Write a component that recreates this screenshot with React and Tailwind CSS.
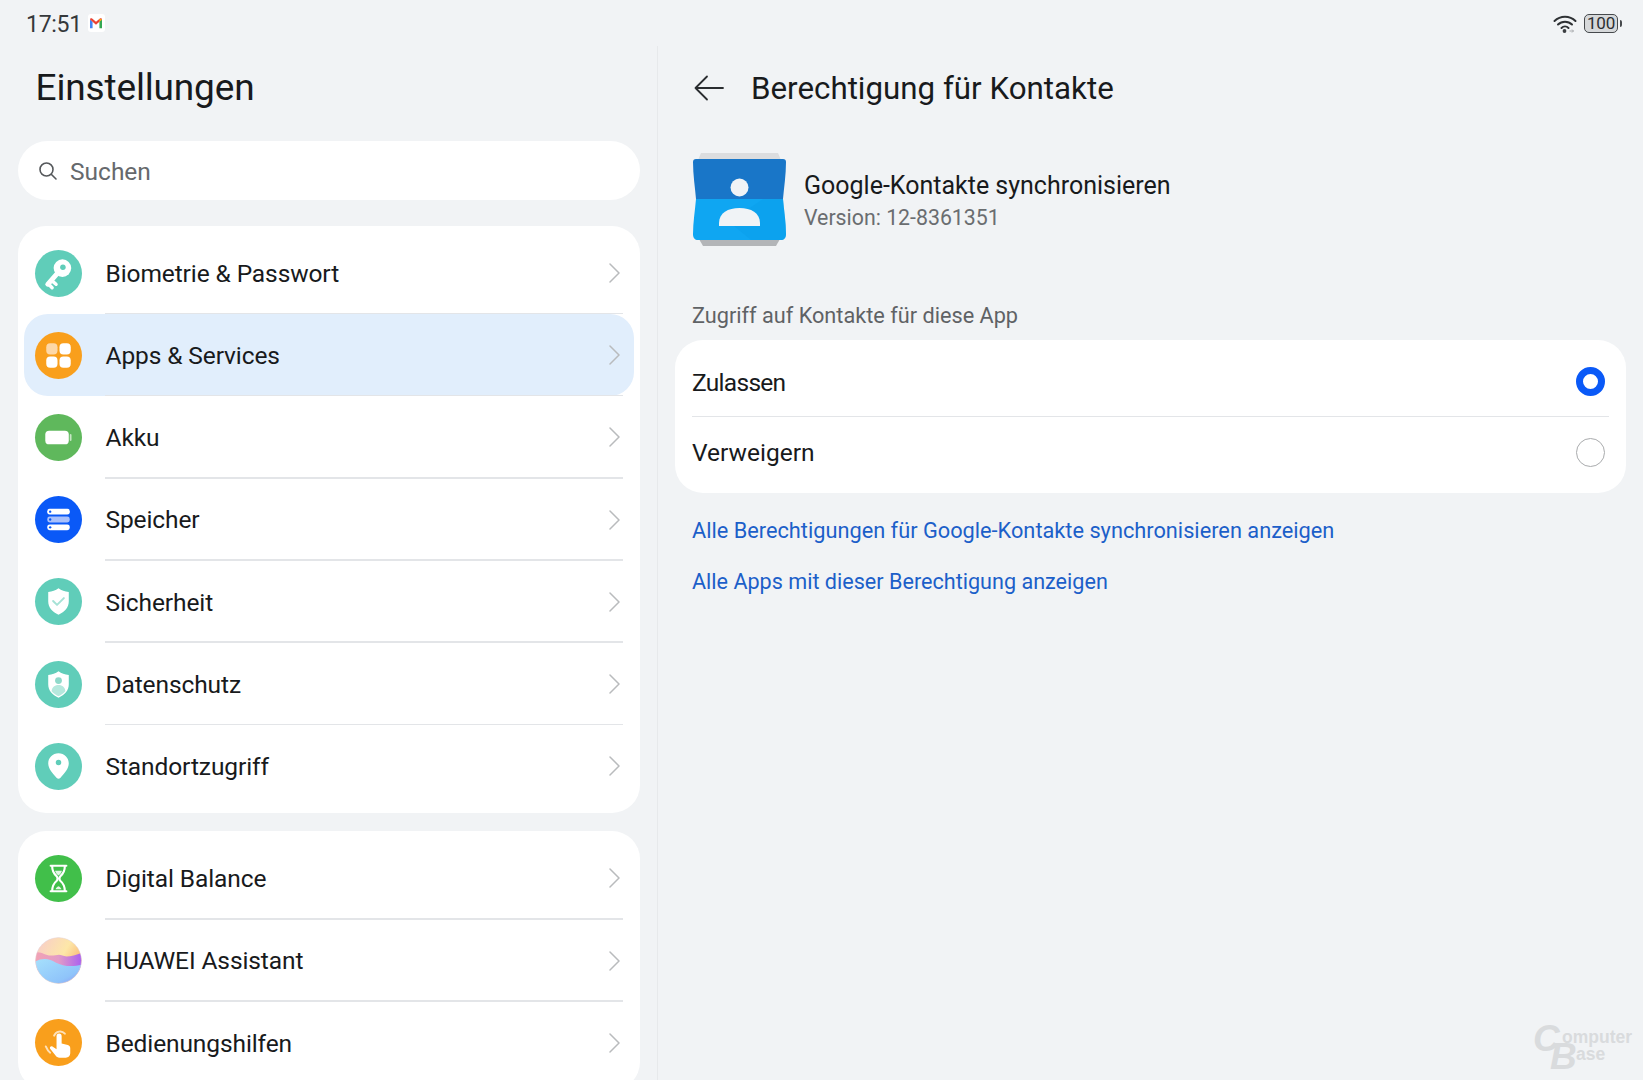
import React from 'react';

const FONT = 'font-["Roboto","Noto_Sans",sans-serif]';

const KeyIcon = () => (
  <svg viewBox="0 0 48 48" className="w-full h-full">
    <circle cx="28" cy="18.500" r="9" fill="#fff" />
    <path d="M23.500 23L13 35" fill="none" stroke="#fff" strokeWidth="5" strokeLinecap="round" />
    <path d="M18 32l3.500 3M14.500 35.500l3 3" fill="none" stroke="#fff" strokeWidth="3.500" strokeLinecap="round" />
    <circle cx="28.500" cy="17.500" r="2.800" fill="#60cdb9" />
  </svg>
);

const AppsIcon = () => (
  <svg viewBox="0 0 48 48" className="w-full h-full">
    <rect x="11.500" y="11.500" width="11.500" height="11.500" rx="4" fill="#fdd8a8" />
    <rect x="25" y="11.500" width="11.500" height="11.500" rx="4" fill="#fff" />
    <rect x="11.500" y="25" width="11.500" height="11.500" rx="4" fill="#fff" />
    <rect x="25" y="25" width="11.500" height="11.500" rx="4" fill="#fff" />
  </svg>
);

const BatteryIcon = () => (
  <svg viewBox="0 0 48 48" className="w-full h-full">
    <rect x="10.500" y="17" width="24" height="14" rx="4" fill="#fff" />
    <rect x="35.500" y="20.500" width="1.800" height="7" rx="0.900" fill="#c6e6c4" />
  </svg>
);

const StorageIcon = () => (
  <svg viewBox="0 0 48 48" className="w-full h-full">
    <rect x="12.500" y="13" width="23" height="6" rx="2.500" fill="#fff" />
    <rect x="12.500" y="21" width="23" height="6" rx="2.500" fill="#a9c0fb" />
    <rect x="12.500" y="29" width="23" height="6" rx="2.500" fill="#fff" />
    <circle cx="15.500" cy="16" r="1.200" fill="#0a59f7" />
    <circle cx="15.500" cy="24" r="1.200" fill="#0a59f7" />
    <circle cx="15.500" cy="32" r="1.200" fill="#0a59f7" />
  </svg>
);

const SHIELD = 'M24 10.500c3 2.200 6.400 3.400 10.500 3.800v9.500c0 6.400-4 10.800-10.500 13.700-6.500-2.900-10.500-7.300-10.500-13.700v-9.500c4.100-.4 7.500-1.600 10.500-3.800z';

const ShieldCheckIcon = () => (
  <svg viewBox="0 0 48 48" className="w-full h-full">
    <path d={SHIELD} fill="#fff" />
    <path d="M18.500 23.500l4 4 7-7" fill="none" stroke="#a6e2d6" strokeWidth="2" strokeLinecap="round" strokeLinejoin="round" />
  </svg>
);

const ShieldUserIcon = () => (
  <svg viewBox="0 0 48 48" className="w-full h-full">
    <path d={SHIELD} fill="#fff" />
    <circle cx="24" cy="20" r="3.500" fill="#8fd9ca" />
    <path d="M17 31c0-4 3-6.500 7-6.500s7 2.500 7 6.500c-1.800 2-4.200 3.800-7 5.100-2.800-1.300-5.200-3.100-7-5.100z" fill="#b5e8dd" />
  </svg>
);

const PinIcon = () => (
  <svg viewBox="0 0 48 48" className="w-full h-full">
    <path d="M24 10.500c5.900 0 10.500 4.500 10.500 10.300 0 5.600-4.600 10.500-8.700 15-1 1-2.600 1-3.600 0-4.100-4.500-8.700-9.400-8.700-15 0-5.800 4.600-10.300 10.500-10.300z" fill="#fff" />
    <circle cx="24" cy="20" r="2.800" fill="#60cdb9" />
  </svg>
);

const HourglassIcon = () => (
  <svg viewBox="0 0 48 48" className="w-full h-full">
    <path d="M16 11h16M16 37h16M17.500 11c0 5 1.500 8 4.500 10.500 1.300 1.100 1.300 3.900 0 5C19 29 17.500 32 17.500 37M30.500 11c0 5-1.500 8-4.500 10.500-1.300 1.100-1.300 3.900 0 5 3 2.500 4.500 5.500 4.500 10.500" fill="none" stroke="#fff" strokeWidth="2.200" strokeLinecap="round" />
    <path d="M20.500 16h7c-.5 2-1.800 3.500-3.500 5-1.700-1.500-3-3-3.500-5zM21 35c.5-1.500 1.500-2.300 3-3 1.500.7 2.500 1.500 3 3z" fill="#fff" opacity="0.85" />
  </svg>
);

const AssistantIcon = () => (
  <svg viewBox="0 0 48 48" className="w-full h-full">
    <defs>
      <linearGradient id="asTop" x1="0" y1="0" x2="1" y2="0.600">
        <stop offset="0" stopColor="#f7c9cf" />
        <stop offset="0.600" stopColor="#fde7a8" />
        <stop offset="1" stopColor="#f9ad6a" />
      </linearGradient>
      <linearGradient id="asMid" x1="0" y1="0" x2="1" y2="0">
        <stop offset="0" stopColor="#f2a3b4" />
        <stop offset="0.500" stopColor="#e29bc7" />
        <stop offset="1" stopColor="#a95ff0" />
      </linearGradient>
      <linearGradient id="asLow" x1="0" y1="0" x2="1" y2="1">
        <stop offset="0" stopColor="#a6e0fc" />
        <stop offset="0.700" stopColor="#8fc4fa" />
        <stop offset="1" stopColor="#8e93f3" />
      </linearGradient>
      <clipPath id="asClip"><circle cx="24" cy="24" r="23.500" /></clipPath>
    </defs>
    <g clipPath="url(#asClip)">
      <rect width="48" height="48" fill="url(#asTop)" />
      <path d="M0 16c6-2 10 3 16 3s8-2 12 0 12 0 20-3v20H0z" fill="url(#asMid)" />
      <path d="M0 25c8-4 15-3 21 1 8 4 17 5 27 2v20H0z" fill="url(#asLow)" />
    </g>
    <circle cx="24" cy="24" r="23.500" fill="none" stroke="#e6d6dc" strokeWidth="0.600" />
  </svg>
);

const TouchIcon = () => (
  <svg viewBox="0 0 48 48" className="w-full h-full">
    <path d="M19.500 17a6.500 6.500 0 0 1 11-2" fill="none" stroke="#fde0b8" strokeWidth="2" strokeLinecap="round" />
    <path d="M11 28c1.500 3.500 2.500 5 4.500 6.500" fill="none" stroke="#fde0b8" strokeWidth="2" strokeLinecap="round" />
    <path d="M22 17.500a2.600 2.600 0 0 1 5.200 0V25l6.300 1.500c1.600.4 2.500 1.700 2.500 3.300V35c0 2.800-2 4.500-4.500 4.500h-6.500c-1.800 0-3-.8-4-2.200l-5.500-6.800c-1-1.300.8-3.300 2.300-2.300L22 31z" fill="#fff" />
  </svg>
);

const GROUP_ONE = [
  { label: 'Biometrie & Passwort', color: 'bg-[#60cdb9]', Icon: KeyIcon },
  { label: 'Apps & Services', color: 'bg-[#f99f1c]', Icon: AppsIcon, active: true },
  { label: 'Akku', color: 'bg-[#5fb85c]', Icon: BatteryIcon },
  { label: 'Speicher', color: 'bg-[#0a59f7]', Icon: StorageIcon },
  { label: 'Sicherheit', color: 'bg-[#60cdb9]', Icon: ShieldCheckIcon },
  { label: 'Datenschutz', color: 'bg-[#60cdb9]', Icon: ShieldUserIcon },
  { label: 'Standortzugriff', color: 'bg-[#60cdb9]', Icon: PinIcon },
];

const GROUP_TWO = [
  { label: 'Digital Balance', color: 'bg-[#41bf4a]', Icon: HourglassIcon },
  { label: 'HUAWEI Assistant', color: 'bg-white', Icon: AssistantIcon },
  { label: 'Bedienungshilfen', color: 'bg-[#f99f1c]', Icon: TouchIcon },
];

const SettingsRow = ({ item, last }) => {
  const { label, color, Icon, active } = item;
  return (
    <div className={`relative flex h-[82.2px] items-center rounded-[24px] pl-[10.5px] pr-[14px] ${active ? 'bg-[#e1eefc]' : ''}`}>
      <div className={`h-[47px] w-[47px] shrink-0 overflow-hidden rounded-full ${color}`}>
        <Icon />
      </div>
      <span className="ml-[24px] flex-1 pt-[2px] text-[24.5px] leading-none tracking-[-0.1px] text-[#181a1c]">{label}</span>
      <svg viewBox="0 0 11 20" className="h-[20px] w-[11px]" fill="none" stroke="#b9bbbd" strokeWidth="1.5" strokeLinecap="round" strokeLinejoin="round">
        <path d="M1 1l9 9-9 9" />
      </svg>
      {!last && <div className="absolute bottom-0 left-[80.5px] right-[11px] h-[1.5px] bg-[#e3e5e8]" />}
    </div>
  );
};

const StatusBar = () => (
  <div className="flex h-[46px] shrink-0 items-center justify-between pl-[26px] pr-[21px]">
    <div className="flex items-center">
      <span className="pt-[2px] text-[23px] leading-none tracking-[-0.3px] text-[#35383b]">17:51</span>
      <div className="ml-[6px] flex h-[18px] w-[17px] items-center justify-center rounded-[3px] bg-white">
        <svg viewBox="0 0 16 14" className="h-[12px] w-[14px]">
          <path d="M1 13V3l3 2.500V13z" fill="#4285f4" />
          <path d="M15 13V3l-3 2.500V13z" fill="#34a853" />
          <path d="M1 3c0-1.500 1.500-2 2.500-1.200L8 5.500l4.500-3.700C13.500 1 15 1.500 15 3l-3 2.500L8 9 4 5.500z" fill="#ea4335" />
          <path d="M12 2.200l3 .8-3 2.500z" fill="#fbbc04" />
        </svg>
      </div>
    </div>
    <div className="flex items-center">
      <svg viewBox="0 0 24 19" className="h-[19px] w-[24px]">
        <path d="M1.500 7a15 15 0 0 1 21 0M5 10.500a10 10 0 0 1 14 0M8.500 14a5 5 0 0 1 7 0" fill="none" stroke="#2e3134" strokeWidth="2" strokeLinecap="round" />
        <circle cx="11.500" cy="17" r="1.900" fill="#3c3f42" />
        <path d="M16.500 17h4M19 15.500l1.500 1.500-1.500 1.500" fill="none" stroke="#a9abae" strokeWidth="1" />
      </svg>
      <div className="ml-[7px] flex h-[19px] w-[34px] items-center justify-center rounded-[5px] border-[1.5px] border-[#46494c] bg-[#d6d8da] text-[17px] leading-none tracking-[-0.2px] text-[#2c2f32]">100</div>
      <div className="ml-[2px] h-[7px] w-[2px] rounded-r-sm bg-[#46494c]" />
    </div>
  </div>
);

const ContactsAppIcon = () => (
  <svg viewBox="0 0 93 93" className="h-[93px] w-[93px] shrink-0">
    <path d="M8 0h77l3 7H5z" fill="#dcdddf" />
    <path d="M6 86h81l-4 7H10z" fill="#b3b5b8" />
    <path d="M3 6h87c2 0 3 1 3 3 0 13-2 25-3 37H3C2 34 0 22 0 9c0-2 1-3 3-3z" fill="#1976c8" />
    <path d="M3 46h87c1 12 3 23 3 35 0 4-2 6-5 6H5c-3 0-5-2-5-6 0-12 2-23 3-35z" fill="#0fa6f2" />
    <path d="M70 46h20c1 12 3 23 3 35 0 4-2 6-5 6H58l-22-18z" fill="#0a9ce8" opacity="0.35" />
    <circle cx="46.500" cy="34.500" r="9" fill="#f0f3f6" />
    <path d="M26 73v-3c0-10 9-15 20.500-15S67 60 67 70v3z" fill="#f0f3f6" />
  </svg>
);

const Radio = ({ checked }) =>
  checked ? (
    <div className="h-[29px] w-[29px] rounded-full border-[7.5px] border-[#0a59f7] bg-white" />
  ) : (
    <div className="h-[29px] w-[29px] rounded-full border-[1.5px] border-[#a9abad] bg-white" />
  );

const App = () => (
  <div className={`relative flex h-[1080px] w-[1643px] flex-col overflow-hidden bg-[#f1f3f5] ${FONT}`}>
    <StatusBar />
    <div className="flex min-h-0 flex-1">
      <aside className="flex w-[658px] shrink-0 flex-col border-r-[1.5px] border-[#e7e9eb] pl-[18px] pr-[17.5px]">
        <h1 className="flex h-[95px] shrink-0 items-center pb-[13px] pl-[17.5px] text-[37px] leading-none font-normal tracking-[-0.15px] text-[#181a1c]">Einstellungen</h1>
        <div className="flex h-[59px] shrink-0 items-center rounded-full bg-white pl-[20px]">
          <svg viewBox="0 0 20 20" className="h-[20px] w-[20px]" fill="none" stroke="#55585b" strokeWidth="1.6" strokeLinecap="round">
            <circle cx="8.500" cy="8.500" r="6.500" />
            <path d="M13.500 13.500l4.500 4.500" />
          </svg>
          <span className="ml-[12px] pt-[4px] text-[24.5px] leading-none text-[#66696c]">Suchen</span>
        </div>
        <section className="mt-[26px] shrink-0 rounded-[28px] bg-white p-[6px]">
          {GROUP_ONE.map((item, i) => (
            <SettingsRow key={item.label} item={item} last={i === GROUP_ONE.length - 1} />
          ))}
        </section>
        <section className="mt-[18px] shrink-0 rounded-[28px] bg-white p-[6px]">
          {GROUP_TWO.map((item, i) => (
            <SettingsRow key={item.label} item={item} last={i === GROUP_TWO.length - 1} />
          ))}
        </section>
      </aside>
      <main className="flex min-w-0 flex-1 flex-col pl-[17px] pr-[17px]">
        <div className="flex h-[84px] shrink-0 items-center pl-[19px]">
          <svg viewBox="0 0 30 26" className="h-[26px] w-[30px]" fill="none" stroke="#2a2d30" strokeWidth="1.8" strokeLinecap="round" strokeLinejoin="round">
            <path d="M29 13H1.500M13 1.500L1.500 13 13 24.500" />
          </svg>
          <h2 className="ml-[27px] pt-[2px] text-[31.3px] leading-none font-normal text-[#181a1c]">Berechtigung für Kontakte</h2>
        </div>
        <div className="mt-[23px] flex shrink-0 items-center pl-[18px]">
          <ContactsAppIcon />
          <div className="ml-[18px] flex flex-col pt-[4px]">
            <span className="text-[25px] leading-[30px] text-[#181a1c]">Google-Kontakte synchronisieren</span>
            <span className="mt-[2px] text-[21.3px] leading-[30px] text-[#6a6d70]">Version: 12-8361351</span>
          </div>
        </div>
        <p className="mt-[58px] pl-[17px] text-[21.7px] leading-[24px] text-[#5f6265]">Zugriff auf Kontakte für diese App</p>
        <section className="mt-[12px] shrink-0 rounded-[28px] bg-white py-[6px] pl-[17px] pr-[17px]">
          <div className="flex h-[71px] items-center justify-between border-b-[1.5px] border-[#e3e5e8]">
            <span className="pt-[4px] text-[24.5px] leading-none tracking-[-0.7px] text-[#181a1c]">Zulassen</span>
            <div className="pr-[4px]"><Radio checked /></div>
          </div>
          <div className="flex h-[70px] items-center justify-between">
            <span className="pt-[2px] text-[24.5px] leading-none text-[#181a1c]">Verweigern</span>
            <div className="pr-[4px]"><Radio /></div>
          </div>
        </section>
        <a className="mt-[25px] pl-[17px] text-[21.75px] leading-[26px] text-[#1c5fc9]">Alle Berechtigungen für Google-Kontakte synchronisieren anzeigen</a>
        <a className="mt-[25px] pl-[17px] text-[21.6px] leading-[26px] text-[#1c5fc9]">Alle Apps mit dieser Berechtigung anzeigen</a>
      </main>
    </div>
    <div className="absolute bottom-[7px] right-[8px] h-[48px] w-[102px] font-['Liberation_Sans',sans-serif] font-bold text-[#d9dbdd]">
      <span className="absolute left-0 top-[-5px] text-[37px] leading-none italic">C</span>
      <span className="absolute left-[29px] top-[4px] text-[17.5px] leading-none">omputer</span>
      <span className="absolute left-[17px] top-[13px] text-[37px] leading-none italic">B</span>
      <span className="absolute left-[43px] top-[21px] text-[17.5px] leading-none">ase</span>
    </div>
  </div>
);

export default App;
